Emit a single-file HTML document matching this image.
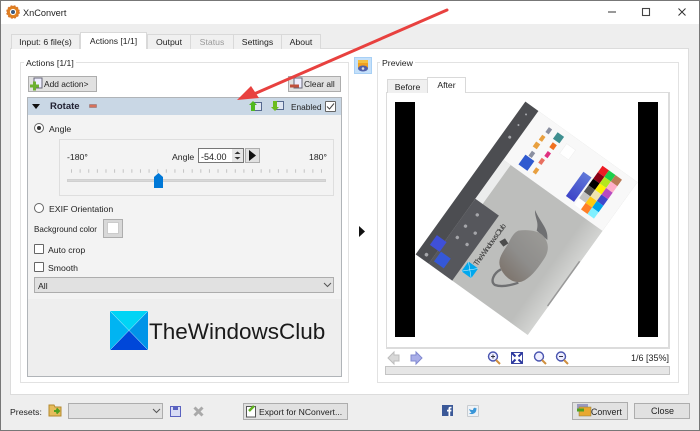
<!DOCTYPE html>
<html><head><meta charset="utf-8"><title>XnConvert</title>
<style>
html,body{margin:0;padding:0;width:700px;height:431px;overflow:hidden;background:#eee}
#w{position:absolute;left:0;top:0;width:700px;height:431px;overflow:hidden;background:#eeeeee;font:8.7px/12px "Liberation Sans",sans-serif;color:#222;filter:blur(.3px)}
#w div,#w span{position:absolute;box-sizing:border-box;white-space:nowrap}
.t{line-height:12px}
.tab{background:#f0f0f0;border:1px solid #d9d9d9;border-bottom:0;text-align:center;line-height:15px}
.on{background:#fff}
.btn{background:#e1e1e1;border:1px solid #adadad}
.cb{background:#fff;border:1px solid #666;border-radius:1px;width:10px;height:10px}
.rd{background:#fff;border:1px solid #666;border-radius:50%;width:10px;height:10px}
svg{position:absolute;overflow:visible}
</style></head><body><div id="w">
<div style="left:0;top:0;width:700px;height:24px;background:#fff"></div>
<svg style="left:6px;top:5px" width="14" height="14" viewBox="0 0 14 14"><circle cx="7" cy="7" r="4.6" fill="none" stroke="#e08020" stroke-width="3"/><circle cx="7" cy="7" r="6" fill="none" stroke="#d9762a" stroke-width="1.6" stroke-dasharray="1.8 1.4"/><circle cx="7" cy="7" r="2" fill="#3c5a80"/></svg>
<span class="t" style="left:23px;top:7px;font-size:9.2px">XnConvert</span>
<svg style="left:600px;top:4px" width="95" height="16"><path d="M8 8h8" stroke="#555" stroke-width="1.2"/><rect x="42.500" y="4.500" width="7" height="7" fill="none" stroke="#444" stroke-width="1.1"/><path d="M78.500 4.500l7 7m0-7l-7 7" stroke="#333" stroke-width="1"/></svg>

<div style="left:10px;top:48px;width:679px;height:347px;background:#fff;border:1px solid #dcdcdc"></div>
<div class="tab" style="left:11px;top:34px;width:69px;height:15px">Input: 6 file(s)</div>
<div class="tab on" style="left:80px;top:32px;width:67px;height:17px;line-height:16px;z-index:2;font-size:8.600px">Actions [1/1]</div>
<div class="tab" style="left:147px;top:34px;width:44px;height:15px">Output</div>
<div class="tab" style="left:190px;top:34px;width:44px;height:15px;color:#999">Status</div>
<div class="tab" style="left:233px;top:34px;width:49px;height:15px">Settings</div>
<div class="tab" style="left:281px;top:34px;width:40px;height:15px">About</div>

<div style="left:20px;top:62px;width:329px;height:321px;border:1px solid #e2e2e2"></div>
<span class="t" style="left:24px;top:57px;background:#fff;padding:0 2px">Actions [1/1]</span>

<div class="btn" style="left:28px;top:76px;width:69px;height:16px"></div>
<svg style="left:30px;top:77px" width="14" height="14" viewBox="0 0 14 14"><rect x="4" y="1" width="8" height="10" fill="#eef" stroke="#667"/><path d="M0 9h9M4.500 4.500v9" stroke="#6cb030" stroke-width="3"/></svg>
<span class="t" style="left:44px;top:78px;font-size:8.400px">Add action&gt;</span>
<div class="btn" style="left:288px;top:76px;width:53px;height:16px"></div>
<svg style="left:290px;top:77px" width="14" height="14" viewBox="0 0 14 14"><rect x="4" y="1" width="8" height="10" fill="#eef" stroke="#667"/><path d="M0 9h9" stroke="#c0503c" stroke-width="3"/></svg>
<span class="t" style="left:304px;top:78px;font-size:8.400px">Clear all</span>

<div style="left:27px;top:97px;width:315px;height:280px;background:#f3f3f3;border:1px solid #b0b4b8"></div>
<div style="left:28px;top:299px;width:313px;height:77px;background:#eeeeee"></div>
<div style="left:28px;top:98px;width:313px;height:17px;background:#c9d7e5"></div>
<svg style="left:32px;top:104px" width="9" height="6"><path d="M0 0h8L4 5z" fill="#111"/></svg>
<span class="t" style="left:50px;top:101px;font-weight:bold;color:#223;font-size:9.500px">Rotate</span>
<div style="left:89px;top:104px;width:8px;height:4px;background:#d8705a;border:1px solid #a88;border-radius:1px"></div>
<svg style="left:249px;top:100px" width="13" height="12" viewBox="0 0 13 12"><rect x="5" y="2.500" width="7.500" height="8" fill="#dfe6f2" stroke="#56698f"/><path d="M4 1L8 5H6V11H2V5H0z" fill="#4fb81f"/></svg>
<svg style="left:271px;top:100px" width="13" height="12" viewBox="0 0 13 12"><rect x="5" y="1.500" width="7.500" height="8" fill="#dfe6f2" stroke="#56698f"/><path d="M4 11L8 7H6V1H2V7H0z" fill="#6cbc1f"/></svg>
<span class="t" style="left:291px;top:101px;font-size:8.300px">Enabled</span>
<div class="cb" style="left:325px;top:101px;width:11px;height:11px"></div>
<svg style="left:326px;top:102px" width="9" height="9"><path d="M1 4.500l2.500 2.500L8 1.500" fill="none" stroke="#444"/></svg>

<div class="rd" style="left:34px;top:123px"></div><div style="left:37px;top:126px;width:4px;height:4px;border-radius:50%;background:#333"></div>
<span class="t" style="left:49px;top:123px">Angle</span>
<div style="left:59px;top:139px;width:275px;height:57px;border:1px solid #dedede"></div>
<span class="t" style="left:67px;top:151px">-180°</span>
<span class="t" style="left:172px;top:151px">Angle</span>
<div style="left:198px;top:148px;width:46px;height:15px;background:#fff;border:1px solid #777"></div>
<span class="t" style="left:201px;top:151px;font-size:9px">-54.00</span>
<div style="left:232px;top:149px;width:11px;height:13px;background:#e6e6e6"></div>
<svg style="left:233px;top:150px" width="9" height="11"><path d="M1.500 4L4.500 1.500L7.500 4zM1.500 7L4.500 9.500L7.500 7z" fill="#333"/></svg>
<div class="btn" style="left:245px;top:148px;width:15px;height:15px"></div>
<svg style="left:249px;top:150px" width="8" height="11"><path d="M0 0L7 5.500L0 11z" fill="#111"/></svg>
<span class="t" style="left:309px;top:151px">180°</span>
<svg style="left:70px;top:169px" width="254" height="5"><path d="M1 2H253" stroke="#c4c4c4" stroke-width="3.500" stroke-dasharray="1 7.620"/></svg>
<div style="left:67px;top:179px;width:259px;height:3px;background:#d8d8d8;border:1px solid #d0d0d0"></div>
<svg style="left:154px;top:173px" width="9" height="15"><path d="M0 4L4.500 0L9 4V15H0z" fill="#0078d7"/></svg>

<div class="rd" style="left:34px;top:203px"></div>
<span class="t" style="left:49px;top:203px">EXIF Orientation</span>
<span class="t" style="left:34px;top:224px;font-size:8.100px">Background color</span>
<div style="left:103px;top:219px;width:20px;height:19px;background:#d8d8d8;border:1px solid #adadad"></div>
<div style="left:107px;top:222px;width:12px;height:12px;background:#fff;border:1px solid #ccc"></div>
<div class="cb" style="left:34px;top:244px"></div>
<span class="t" style="left:48px;top:244px">Auto crop</span>
<div class="cb" style="left:34px;top:262px"></div>
<span class="t" style="left:48px;top:262px">Smooth</span>
<div style="left:34px;top:277px;width:300px;height:16px;background:#e1e1e1;border:1px solid #adadad"></div>
<span class="t" style="left:38px;top:280px">All</span>
<svg style="left:323px;top:282px" width="9" height="6"><path d="M1 1L4.500 4.500L8 1" fill="none" stroke="#555"/></svg>

<svg style="left:110px;top:311px" width="38" height="39" viewBox="0 0 38 39"><path d="M0 0H38L19 19.500z" fill="#00d4f5"/><path d="M0 0L19 19.500L0 39z" fill="#00b4f2"/><path d="M38 0L19 19.500L38 39z" fill="#0094e8"/><path d="M0 39L19 19.500L38 39z" fill="#0047d9"/><path d="M0 0L38 39M38 0L0 39" stroke="#bfefff" stroke-width=".5"/></svg>
<span style="left:149px;top:318px;font:22.500px/28px 'Liberation Sans',sans-serif;color:#1a1a1a">TheWindowsClub</span>

<div style="left:354px;top:57px;width:18px;height:17px;background:#c4e0fa;border:1px solid #a8d0f5"></div>
<svg style="left:357px;top:60px" width="12" height="12" viewBox="0 0 12 12"><rect x="1" y="0" width="10" height="8" fill="#f0a020"/><rect x="1" y="0" width="10" height="3" fill="#f5c040"/><ellipse cx="6" cy="8.500" rx="5" ry="3" fill="#5060a8"/><circle cx="6" cy="8.500" r="1.300" fill="#ddd"/></svg>
<svg style="left:359px;top:226px" width="7" height="11"><path d="M0 0L6 5.500L0 11z" fill="#111"/></svg>

<div style="left:377px;top:62px;width:302px;height:321px;border:1px solid #e2e2e2"></div>
<span class="t" style="left:380px;top:57px;background:#fff;padding:0 2px">Preview</span>
<div style="left:386px;top:92px;width:284px;height:257px;border:1px solid #dcdcdc;border-right-width:2px;border-bottom-width:2px"></div>
<div class="tab" style="left:387px;top:79px;width:41px;height:14px">Before</div>
<div class="tab on" style="left:427px;top:77px;width:39px;height:16px;z-index:2">After</div>
<div style="left:395px;top:102px;width:20px;height:235px;background:#000"></div>
<div style="left:638px;top:102px;width:20px;height:235px;background:#000"></div>

<svg style="left:410px;top:95px" width="240" height="245" viewBox="0 0 720 735">
<defs>
<linearGradient id="g1" x1="0" y1="0" x2="1" y2="0"><stop offset="0" stop-color="#3d44c8"/><stop offset="1" stop-color="#5f78d8"/></linearGradient>
<linearGradient id="g2" x1="0" y1="0" x2="0" y2="1"><stop offset="0" stop-color="#bdbebc"/><stop offset="1" stop-color="#d3d4d2"/></linearGradient>
<linearGradient id="g3" x1="0.850" y1="0.150" x2="0.150" y2="0.850"><stop offset="0" stop-color="#999895"/><stop offset=".55" stop-color="#8e8d8b"/><stop offset="1" stop-color="#7f7770"/></linearGradient>
</defs>
<g transform="translate(17,478) rotate(-54.300) scale(3)">
<rect width="188" height="138" fill="#bdbebc"/>
<rect y="116" width="128" height="22" fill="url(#g2)"/>
<rect x="35" y="136.500" width="55" height="1.500" fill="#999"/>
<rect x="128" y="16" width="60" height="122" fill="#f8f8f8"/>
<rect width="188" height="16" fill="#4c4d51"/>
<rect x="78" y="16" width="50" height="9" fill="#eceded"/>
<rect x="0" y="16" width="80" height="29" fill="#56575c"/>
<rect x="16" y="6" width="12" height="12" fill="#3f50d8"/>
<rect x="5" y="19" width="12" height="12" fill="#3558d8"/>
<g fill="#a5a6aa"><circle cx="6" cy="9" r="1.800"/><circle cx="38" cy="24" r="1.700"/><circle cx="38" cy="36" r="1.700"/><circle cx="52" cy="24" r="1.700"/><circle cx="52" cy="36" r="1.700"/><circle cx="68" cy="27" r="1.700"/><circle cx="150" cy="8" r="1.500"/><circle cx="165" cy="8" r="1"/><circle cx="178" cy="8" r="1"/></g>
<rect x="135" y="88" width="30" height="10" fill="url(#g1)"/>
<rect x="133" y="31" width="12" height="11" fill="#2f5ad0"/>
<rect x="166" y="58" width="12" height="11" fill="#fff" stroke="#eee" stroke-width=".5"/>
<rect x="173" y="100" width="8" height="8" fill="#ed1c24"/><rect x="173" y="108" width="8" height="8" fill="#1ccf4c"/><rect x="173" y="116" width="8" height="8" fill="#b97a57"/>
<rect x="165" y="100" width="8" height="8" fill="#880015"/><rect x="165" y="108" width="8" height="8" fill="#b5e61d"/><rect x="165" y="116" width="8" height="8" fill="#ffaec9"/>
<rect x="157" y="100" width="8" height="8" fill="#000"/><rect x="157" y="108" width="8" height="8" fill="#fff200"/><rect x="157" y="116" width="8" height="8" fill="#b84cc0"/>
<rect x="149" y="100" width="8" height="8" fill="#555"/><rect x="149" y="108" width="8" height="8" fill="#efe4b0"/><rect x="149" y="116" width="8" height="8" fill="#3f48cc"/>
<rect x="141" y="100" width="8" height="8" fill="#c3c3c3"/><rect x="141" y="108" width="8" height="8" fill="#ffc90e"/><rect x="141" y="116" width="8" height="8" fill="#00a2e8"/>
<rect x="133" y="100" width="8" height="8" fill="#fff"/><rect x="133" y="108" width="8" height="8" fill="#ff7f27"/><rect x="133" y="116" width="8" height="8" fill="#80f0ff"/>
<rect x="175" y="34" width="6" height="4" fill="#8a8fa0"/><rect x="174" y="44" width="8" height="8" fill="#3f8f90"/><rect x="165" y="33" width="6" height="4" fill="#e8a040"/><rect x="156" y="32" width="6" height="5" fill="#e8a040"/><rect x="165" y="46" width="6" height="5" fill="#f07020"/><rect x="146" y="34" width="6" height="4" fill="#8a8fa0"/><rect x="155" y="47" width="6" height="4" fill="#e03080"/><rect x="146" y="46" width="6" height="4" fill="#e87060"/><rect x="135" y="47" width="6" height="4" fill="#e8a040"/>
<rect x="13" y="47" width="12" height="12" fill="#00a8ee"/>
<path d="M13 47L25 59M25 47L13 59" stroke="#fff" stroke-width=".4"/>
<text x="26" y="57" font-family="Liberation Sans" font-size="7.500" textLength="50" fill="#333">TheWindowsClub</text>
</g>
<g transform="translate(90,345)">
<path d="M183 178C160 190 150 215 165 225C185 232 215 225 235 218" fill="none" stroke="#6f7072" stroke-width="7"/>
<path d="M285 0C284 25 298 35 290 62L322 90C326 55 302 40 285 0z" fill="#6f7072"/>
<path d="M235 62C265 58 295 62 310 78C328 100 328 125 310 150C290 180 270 205 245 215C220 222 190 200 180 170C172 145 190 125 205 100C215 80 222 68 235 62z" fill="url(#g3)"/>
<path d="M178 95L195 85L205 100L190 110z" fill="#4c4c4c"/>
</g>
</svg>

<svg style="left:387px;top:351px" width="185" height="14" viewBox="0 0 185 14">
<path d="M1 7L7 1V4H12V10H7V13z" fill="#d8d8d8" stroke="#bdbdbd"/>
<path d="M35 7L29 1V4H24V10H29V13z" fill="#a9aee8" stroke="#8189d0"/>
<g fill="#eef" stroke="#4a55b0" stroke-width="1.400"><circle cx="106" cy="5.500" r="4.500"/><circle cx="152" cy="5.500" r="4.500"/><circle cx="174" cy="5.500" r="4.500"/></g>
<path d="M109 9l4 4M155 9l4 4M177 9l4 4" stroke="#cf8f3f" stroke-width="2"/>
<path d="M104 5.500h4M106 3.500v4M172 5.500h4" stroke="#334" stroke-width="1"/>
<rect x="124.500" y="1.500" width="11" height="11" fill="#fff" stroke="#3a46a0"/><path d="M125 2l3.500 3.500M135 2l-3.500 3.500M125 12l3.500-3.500M135 12l-3.500-3.500" stroke="#2a36a0" stroke-width="2"/>
</svg>
<span class="t" style="right:31px;top:352px;font-size:9px">1/6 [35%]</span>
<div style="left:385px;top:366px;width:285px;height:9px;background:#e6e6e6;border:1px solid #c4c4c4"></div>

<span class="t" style="left:10px;top:406px">Presets:</span>
<svg style="left:48px;top:404px" width="14" height="13" viewBox="0 0 14 13"><path d="M1 1H6L7 3H13V12H1z" fill="#e6bc5c" stroke="#b48a30"/><path d="M6 7h5M8.500 4.500L11 7 8.500 9.500" stroke="#50a020" stroke-width="2" fill="none"/></svg>
<div style="left:68px;top:403px;width:95px;height:16px;background:#e1e1e1;border:1px solid #adadad"></div>
<svg style="left:152px;top:408px" width="9" height="6"><path d="M1 1L4.500 4.500L8 1" fill="none" stroke="#555"/></svg>
<svg style="left:170px;top:406px" width="11" height="11" viewBox="0 0 11 11"><path d="M.5.500H10.500V10.500H.5z" fill="#d8dcf5" stroke="#5a62c0"/><rect x="3" y="1" width="5" height="3" fill="#5a62c0"/></svg>
<svg style="left:193px;top:406px" width="11" height="11"><path d="M1.500 1.500L9.500 9.500M9.500 1.500L1.500 9.500" stroke="#a9a9a9" stroke-width="3"/></svg>
<div class="btn" style="left:243px;top:403px;width:105px;height:17px"></div>
<svg style="left:246px;top:404px" width="12" height="14" viewBox="0 0 12 14"><rect x=".5" y="2.500" width="9" height="10.500" fill="#fff" stroke="#555"/><path d="M3 7L8 2" stroke="#60b020" stroke-width="2.500"/></svg>
<span class="t" style="left:259px;top:406px;font-size:8.600px">Export for NConvert...</span>
<div style="left:442px;top:405px;width:11px;height:11px;background:#3b5998"></div>
<svg style="left:442px;top:405px" width="11" height="11"><path d="M6.500 11V6.500H5V4.800H6.500V3.500C6.500 2 7.500 1.500 9.500 1.800V3.300C8.500 3.200 8.200 3.300 8.200 4V4.800H9.500L9.300 6.500H8.200V11z" fill="#fff"/></svg>
<div style="left:467px;top:405px;width:12px;height:12px;background:#eef2f6;border:1px solid #c8ccd0;border-radius:1px"></div>
<svg style="left:469px;top:407px" width="8" height="8"><path d="M0 2C2 3 3 3 4 3C4 1 6 0 7 1.500L8 1.500L7.300 2.500C7.500 5 5 7.500 2 7C1.500 7 .500 6.500 0 6C1 6 2 6 2.500 5.500C1.500 5 .500 3.500 0 2z" fill="#3a96d8"/></svg>
<div class="btn" style="left:572px;top:402px;width:56px;height:18px"></div>
<svg style="left:577px;top:404px" width="15" height="13" viewBox="0 0 15 13"><rect x="0" y="0" width="11" height="7" fill="#9a9ac0"/><rect x="2" y="3" width="12" height="9" fill="#e8a830" stroke="#8a7a40" stroke-width=".5"/><path d="M0 6h7" stroke="#50a020" stroke-width="3"/></svg>
<span class="t" style="left:591px;top:406px;font-size:8.800px">Convert</span>
<div class="btn" style="left:634px;top:403px;width:56px;height:16px"></div>
<span class="t" style="left:651px;top:405px;font-size:9px">Close</span>

<svg style="left:0;top:0;z-index:5" width="700" height="431"><path d="M447 10L254 94" stroke="#e8413f" stroke-width="3" stroke-linecap="round"/><path d="M237 100L251 86L259 98z" fill="#e8413f"/></svg>
<div style="left:0;top:0;width:700px;height:431px;border:1px solid #777;z-index:6"></div>
</div></body></html>
